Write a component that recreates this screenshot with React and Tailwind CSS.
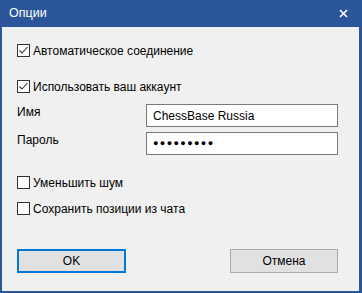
import { useState } from "react";

function Check({ checked, label, className, onToggle }) {
  return (
    <div className={`flex items-center h-[13px] ${className}`} onClick={onToggle}>
      <div className="w-[13px] h-[13px] bg-white border border-[#333333] flex items-center justify-center shrink-0">
        {checked && (
          <svg width="11" height="11" viewBox="0 0 11 11">
            <polyline points="1.5,5.5 4,8 9.5,2" fill="none" stroke="#333333" strokeWidth="1.1" />
          </svg>
        )}
      </div>
      <span className="ml-[3px] leading-none text-black">{label}</span>
    </div>
  );
}

function App() {
  const [auto, setAuto] = useState(true);
  const [account, setAccount] = useState(true);
  const [noise, setNoise] = useState(false);
  const [save, setSave] = useState(false);

  return (
    <div
      className="w-[362px] h-[293px] bg-[#2b579a] flex flex-col text-[12px] select-none"
      style={{ fontFamily: '"Liberation Sans", Arial, sans-serif' }}
    >
      <div className="h-[27px] flex items-center justify-between pl-[9px] pr-[14px] text-white">
        <span className="text-[12.5px]">Опции</span>
        <svg width="9" height="9" viewBox="0 0 9 9">
          <path d="M1 1 L8 8 M8 1 L1 8" stroke="white" strokeWidth="1.6" />
        </svg>
      </div>

      <div className="flex-1 ml-[2px] mr-[3px] mb-[2px] bg-[#f0f0f0] flex flex-col pl-[15px] pr-[21px]">
        <Check className="mt-[17px]" checked={auto} onToggle={() => setAuto(!auto)} label="Автоматическое соединение" />
        <Check className="mt-[23px]" checked={account} onToggle={() => setAccount(!account)} label="Использовать ваш аккаунт" />

        <div className="mt-[11px] flex items-center justify-between h-[23px]">
          <span className="-mt-[7px]">Имя</span>
          <div className="w-[192px] h-[23px] bg-white border border-[#7a7a7a] flex items-center px-[6px]">
            ChessBase Russia
          </div>
        </div>
        <div className="mt-[5px] flex items-center justify-between h-[23px]">
          <span className="-mt-[7px]">Пароль</span>
          <div className="w-[192px] h-[23px] bg-white border border-[#7a7a7a] flex items-center px-[6px] text-[9px] tracking-[1.4px]">
            ●●●●●●●●●
          </div>
        </div>

        <Check className="mt-[21px]" checked={noise} onToggle={() => setNoise(!noise)} label="Уменьшить шум" />
        <Check className="mt-[13px]" checked={save} onToggle={() => setSave(!save)} label="Сохранить позиции из чата" />

        <div className="mt-[34px] flex justify-between">
          <button className="w-[109px] h-[24px] bg-[#e1e1e1] border-2 border-[#0078d7] text-black">OK</button>
          <button className="w-[108px] h-[24px] bg-[#e1e1e1] border border-[#adadad] text-black">Отмена</button>
        </div>
      </div>
    </div>
  );
}

export default App;
